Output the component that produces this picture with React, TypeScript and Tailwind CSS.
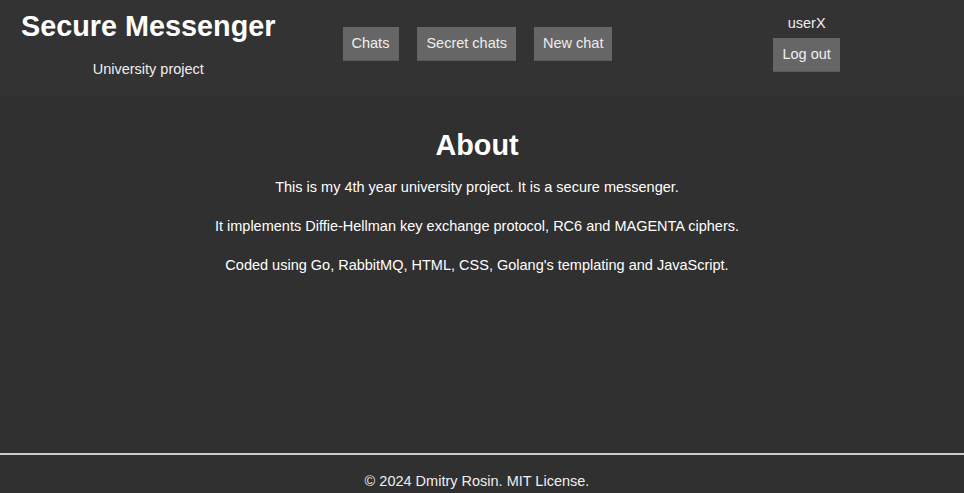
export default function App() {
  return (
    <div className="min-h-[493px] flex flex-col bg-[#303030] text-white font-['Liberation_Sans',Arial,sans-serif]">
      <header className="h-[96px] bg-[#333333] flex items-start px-[21px]">
        <div className="flex flex-col items-center pt-[10px]">
          <h1 className="text-[28.8px] font-bold leading-[33px]">Secure Messenger</h1>
          <span className="text-[14.5px] leading-[17px] text-[#eeeeee] mt-[18px]">University project</span>
        </div>
        <nav className="flex gap-[18px] ml-[67px] mt-[27px]">
          <button className="bg-[#666666] border-b border-[#5a5a5a] text-[14.5px] text-[#eeeeee] h-[34px] pl-[9px] pr-[10px]">Chats</button>
          <button className="bg-[#666666] border-b border-[#5a5a5a] text-[14.5px] text-[#eeeeee] h-[34px] px-[9px]">Secret chats</button>
          <button className="bg-[#666666] border-b border-[#5a5a5a] text-[14.5px] text-[#eeeeee] h-[34px] px-[9px]">New chat</button>
        </nav>
        <div className="flex flex-col items-center ml-[161px] mt-[15px]">
          <span className="text-[14.5px] text-[#eeeeee] leading-[16px]">userX</span>
          <button className="bg-[#666666] border-b border-[#5a5a5a] text-[14.5px] text-[#eeeeee] h-[34px] px-[9px] mt-[7px]">Log out</button>
        </div>
      </header>
      <main className="flex-1 flex flex-col items-center pr-[10px]">
        <h2 className="text-[28.8px] font-bold leading-[33px] mt-[33px]">About</h2>
        <p className="text-[14.5px] leading-[17px] mt-[17px]">This is my 4th year university project. It is a secure messenger.</p>
        <p className="text-[14.5px] leading-[17px] mt-[22px]">It implements Diffie-Hellman key exchange protocol, RC6 and MAGENTA ciphers.</p>
        <p className="text-[14.5px] leading-[17px] mt-[22px]">Coded using Go, RabbitMQ, HTML, CSS, Golang's templating and JavaScript.</p>
      </main>
      <footer className="border-t-2 border-[#cccccc] h-[40px] flex justify-center pt-[18px] pr-[10px]">
        <span className="text-[14.5px] leading-[17px] text-[#eeeeee]">© 2024 Dmitry Rosin. MIT License.</span>
      </footer>
    </div>
  );
}
